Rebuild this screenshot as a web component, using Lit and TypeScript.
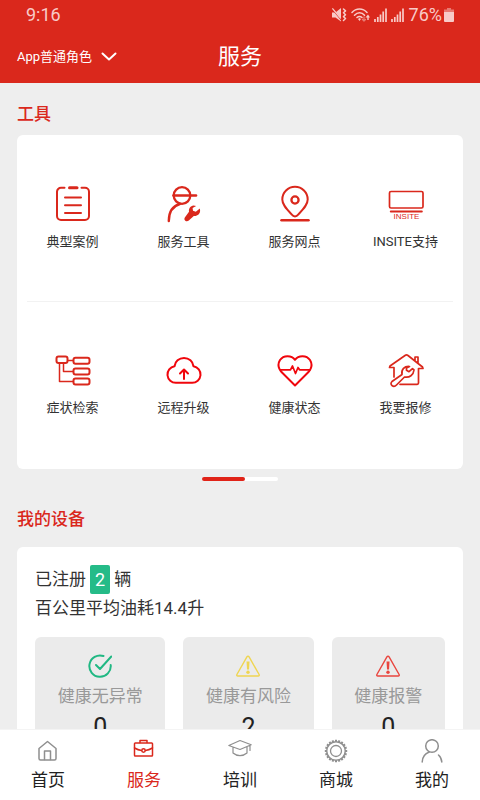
import { LitElement, html, css, svg, nothing } from "lit";
import { customElement, state } from "lit/decorators.js";

const icon = (w: number, h: number, body: unknown) => html`<svg
  width=${w} height=${h} viewBox="0 0 ${w} ${h}" fill="none" stroke="currentColor"
  stroke-width="2" stroke-linecap="round" stroke-linejoin="round" aria-hidden="true">${body}</svg>`;

const gearTeeth = Array.from({ length: 20 }, (_, i) => i * 18);

const icons = {
  chevron: icon(16, 10, svg`<path d="M1.5 1.5 8 7.5l6.500-6" />`),
  mute: icon(15, 14, svg`
    <path fill="currentColor" stroke="none" d="M0 4.500h3.500L9 0v13.500L3.500 9.500H0Z" />
    <path stroke="#da281c" stroke-width="1.400" d="M0 .5 9.500 12" />
    <path stroke-width="1.300" d="M.8.8 8.500 10" />
    <path stroke-width="1.500" d="M11.500 1l2 1.900-2 1.900 2 1.900-2 1.900 2 1.900-2 2" />`),
  wifi: icon(19, 14, svg`
    <g stroke-width="1.500"><path d="M1 4.500C5-.2 12-.2 16 4.500M3.500 7.200c3-3.200 7.200-3.200 10 0M6 9.500c1.500-1.500 3.500-1.500 5 0" /></g>
    <path fill="currentColor" stroke="none" d="m7 11 1.500-1 1.500 1-1.500 2ZM14.500 9.500 17 6.500l2 3h-1.300V12h-1.400V9.500Z" />
    <path opacity=".5" stroke-width="1.300" d="M13 9v4m-1.500-1.500L13 13l1.500-1.500" />`),
  signal: icon(13, 14, svg`<path stroke-width="1.700" stroke-linecap="butt"
    d="M1 14v-3M3.800 14V9M6.500 14V6.500M9.200 14V3.500M12 14V.5" />`),
  battery: icon(10, 14, svg`<g fill="currentColor" stroke="none">
    <path opacity=".5" d="M3 0h4v1.500h3V4H0V1.500h3Z" /><path d="M0 4h10v9a1 1 0 0 1-1 1H1a1 1 0 0 1-1-1Z" /></g>`),

  cases: icon(38, 38, svg`
    <path d="M10.500 2.800H7A4 4 0 0 0 3 6.800v24.200a4 4 0 0 0 4 4h24a4 4 0 0 0 4-4V6.800a4 4 0 0 0-4-4h-3.500" />
    <path stroke-width="3" d="M15.500 2.800h7.500" /><path d="M11 12.500h16M11 20.300h16M11 28h16" />`),
  worker: icon(38, 38, svg`
    <circle cx="17" cy="10.500" r="8.300" stroke-width="2.300" />
    <path stroke-width="2.600" d="M8.500 10.500h22.500" /><path stroke-width="2.400" d="M3.800 36c0-9 4-15 11-17" />
    <path fill="currentColor" stroke="none" d="M28.500 20.500c-3 .4-5 3-4.500 6.200L20 32.200c-2 2.800 1.500 5.500 3.800 3.300l5-4.500c3.500.4 6.500-2.200 6.300-5.500l-.3-2-4 3.200-2.800-1-.4-2.800 3.600-1.800Z" />`),
  pin: icon(38, 38, svg`
    <path d="M19 31.500c-2 0-2.500-1-4-2.800C10 23.500 6.300 19.500 6.300 14.500a12.700 12.700 0 0 1 25.400 0c0 5-3.700 9-8.700 14.200-1.500 1.800-2 2.800-4 2.800Z" />
    <circle cx="19" cy="15" r="3.600" stroke-width="2.300" /><path stroke-width="2.500" d="M5.500 35.300h27" />`),
  insite: icon(38, 38, svg`
    <rect x="2.500" y="6.500" width="33.500" height="16.500" rx="1.500" stroke-width="1.700" />
    <path stroke-width="2" d="M3.800 26.500h31" />
    <text class="glyph" x="19.500" y="33.500" text-anchor="middle">INSITE</text>`),
  tree: icon(38, 38, svg`
    <g stroke-width="2"><rect x="2.500" y="5.500" width="11" height="6.500" rx="2" /><rect x="19.500" y="6.800" width="16" height="6" rx="2" />
    <rect x="19.500" y="17.500" width="16" height="6" rx="2" /><rect x="19.500" y="27.500" width="16" height="6" rx="2" /></g>
    <path stroke-width="1.500" d="M14 9.500h5M9.500 12.500v8h9.500M5.500 12.500v18H19" />`),
  cloud: icon(38, 38, svg`
    <path stroke="#f0060c" d="M11 31.800a8.300 8.300 0 0 1-1.500-16.500C10 10.500 14 7 19 7s9 3.500 9.500 8.300a8.300 8.300 0 0 1-1.500 16.500Z" />
    <path stroke="#f0060c" d="M19 28v-8.500M15 22.500l4-4 4 4" />`),
  heart: icon(38, 38, svg`
    <path stroke="#f0060c" d="M19 34.500 6.500 22C2.500 18 1.500 13 4 9c3.500-5 11.500-5 15-.2C22.500 4 30.500 4 34 9c2.500 4 1.500 9-2.500 13Z" />
    <path stroke="#f0060c" stroke-width="1.700" d="M4.500 18.800h10l2-3.800 3 7.500 2.500-6 1.500 2.300h10.500" />`),
  repair: icon(38, 38, svg`<g stroke-width="1.700">
    <path d="M7 26v-9.500H2.500L3 15 18 4.500c1-.7 2-.7 3 0L35.500 16l.5 1.500h-4.500V32c0 .8-.5 1.300-1.300 1.300H13M28 9.500V6h3v6" />
    <path d="M22.500 15.500c-5-.5-8.500 3-7.500 8L5 30.500c-3 3 1.500 6.500 4.500 3.500l8-8c5 1 9-2 9.500-7l-1.500-1.300-3.500 3-2.500-1.500v-2.200Z" /></g>`),

  ok: icon(24, 24, svg`<path d="M15.500 2A10.700 10.700 0 1 0 22.700 11M8 11l4 4L23.300 2.500" />`),
  alert: icon(24, 24, svg`
    <path stroke-width="1.400" d="M12 2.200c.5 0 .8.200 1.100.7l10 17.600c.4.800 0 1.500-.9 1.500H1.800c-.9 0-1.300-.7-.9-1.500l10-17.600c.3-.5.600-.7 1.100-.7Z" />
    <path fill="currentColor" stroke="none" d="M10.500 7.500h3l-.5 8h-2Z" /><circle cx="12" cy="18.300" r="1.700" fill="currentColor" stroke="none" />`),

  home: icon(24, 24, svg`<g stroke-width="1.500"><path d="M3 9.500 11.500 2.500 20 9.500v10a1.500 1.500 0 0 1-1.500 1.500h-14A1.500 1.500 0 0 1 3 19.500Z" />
    <path d="M8.500 20.500V12h6v8.500" /></g>`),
  briefcase: icon(24, 24, svg`<g stroke-width="1.500"><rect x="2.500" y="4" width="18" height="13" rx=".8" />
    <path d="M8 3.500v-2h7v2M2.500 9c2.500 1.500 4.500 2.200 7 2.400M20.500 9c-2.500 1.500-4.500 2.200-7 2.400" /><circle cx="11.500" cy="11.500" r="1.700" /></g>`),
  cap: icon(24, 24, svg`<g stroke-width="1.200"><path d="M.8 6.500 12 1.500l11.200 4.200L12 10.500ZM5 8.500V14c4 3.500 10 3.500 14 0V8M22 6.500v5" /></g>`),
  gear: icon(24, 24, svg`<g stroke-width="1.500"><circle cx="12" cy="12" r="9.300" /><circle cx="12" cy="12" r="5.500" stroke-width="1.300" />
    ${gearTeeth.map((a) => svg`<path stroke-width="2" stroke-linecap="butt" d="M12 .8v2" transform="rotate(${a} 12 12)" />`)}</g>`),
  person: icon(24, 24, svg`<g stroke-width="1.500"><circle cx="12" cy="7" r="6.300" /><path d="M2.200 23c.2-5 3-8.500 7-10M18.500 16c2 1.800 3.200 4 3.300 7" /></g>`),
};

const tools = [
  { label: "典型案例", icon: icons.cases },
  { label: "服务工具", icon: icons.worker },
  { label: "服务网点", icon: icons.pin },
  { label: "INSITE支持", icon: icons.insite },
  { label: "症状检索", icon: icons.tree },
  { label: "远程升级", icon: icons.cloud },
  { label: "健康状态", icon: icons.heart },
  { label: "我要报修", icon: icons.repair },
];

const health = [
  { label: "健康无异常", count: 0, tone: "good", icon: icons.ok },
  { label: "健康有风险", count: 2, tone: "risk", icon: icons.alert },
  { label: "健康报警", count: 0, tone: "alarm", icon: icons.alert },
];

const tabs = [
  { label: "首页", icon: icons.home },
  { label: "服务", icon: icons.briefcase },
  { label: "培训", icon: icons.cap },
  { label: "商城", icon: icons.gear },
  { label: "我的", icon: icons.person },
];

@customElement("app-root")
export class AppRoot extends LitElement {
  @state() private activeTab = "服务";

  static styles = css`
    :host {
      display: flex;
      flex-direction: column;
      height: 100vh;
      overflow: hidden;
      background: #eeeeee;
      color: #333;
      font-family: Roboto, "Noto Sans CJK SC", sans-serif;
      font-size: 17px;
      line-height: 28px;
    }
    * { box-sizing: border-box; }
    svg { display: block; flex: none; }
    button {
      appearance: none;
      border: 0;
      padding: 0;
      background: none;
      color: inherit;
      font: inherit;
      cursor: pointer;
    }
    h1, h2, p { margin: 0; }

    .header { flex: none; background: #da281c; color: #fff; }
    .status {
      display: flex;
      align-items: center;
      height: 30px;
      padding: 0 26px;
      font-size: 18px;
      color: #f8cbc8;
    }
    .time { flex: 1; }
    .indicators { display: flex; align-items: center; gap: 4px; }
    .power { display: flex; align-items: center; gap: 2px; padding-left: 1px; }
    .titlebar {
      display: grid;
      grid-template-columns: 1fr auto 1fr;
      align-items: center;
      height: 53px;
      padding: 0 17px;
    }
    .role {
      justify-self: start;
      display: flex;
      align-items: center;
      gap: 9px;
      font-size: 13px;
      line-height: 20px;
    }
    .title { font-size: 22px; font-weight: 400; line-height: 32px; }

    .content { flex: 1; min-height: 0; overflow-y: auto; scrollbar-width: none; padding: 0 17px; }
    .heading { color: #da281c; font-size: 17px; font-weight: 500; line-height: 28px; }
    .tools-heading { padding: 17px 0 7px; }
    .devices-heading { padding: 24px 0 13px; }
    .card { background: #fff; border-radius: 6px; }

    .tools {
      position: relative;
      display: grid;
      grid-template-columns: repeat(4, 1fr);
      grid-auto-rows: 166px;
      padding: 0 2px 2px 0;
    }
    .tools::after {
      content: "";
      position: absolute;
      inset: 166px 10px auto;
      border-top: 1px solid #f2f2f2;
    }
    .tool {
      display: flex;
      flex-direction: column;
      align-items: center;
      justify-content: center;
      gap: 9px;
      font-size: 13px;
      line-height: 20px;
    }
    .tool svg { color: #da281c; }
    .glyph {
      fill: #da281c;
      stroke: none;
      font-family: "Liberation Sans", sans-serif;
      font-size: 8px;
    }
    .pager { display: flex; width: 76px; height: 4px; margin: 8px auto 0; border-radius: 2px; background: #fff; }
    .page-on { width: 43px; border-radius: 2px; background: #e02318; }

    .devices { margin-top: 1px; padding: 18px; }
    .registered { display: flex; align-items: center; gap: 4px; line-height: 29px; }
    .badge {
      padding: 0 5px;
      border-radius: 2px;
      background: #25bb88;
      color: #fff;
      font-size: 18px;
    }
    .panels { display: flex; gap: 18px; padding-top: 15px; }
    .panel {
      flex: 1 1 auto;
      display: flex;
      flex-direction: column;
      align-items: center;
      padding: 17px 0 12px;
      border-radius: 6px;
      background: #ebebeb;
      color: #999;
    }
    .panel svg { margin-bottom: 4px; }
    .good svg { color: #20b883; }
    .risk svg { color: #efd552; }
    .alarm svg { color: #e9463f; }
    .count { margin-top: 2px; color: #222; font-size: 25px; line-height: 32px; }

    .tabs {
      flex: none;
      display: grid;
      grid-template-columns: repeat(5, 1fr);
      height: 71px;
      border-top: 1px solid #f4f4f4;
      background: #fff;
    }
    .tab {
      display: flex;
      flex-direction: column;
      align-items: center;
      gap: 3px;
      padding-top: 9px;
      color: #222;
    }
    .tab svg { color: #8f8f8f; }
    .tab[aria-current], .tab[aria-current] svg { color: #da281c; }
  `;

  render() {
    return html`
      <header class="header">
        <div class="status">
          <span class="time">9:16</span>
          <div class="indicators">
            ${icons.mute}${icons.wifi}${icons.signal}${icons.signal}
            <span class="power">76%${icons.battery}</span>
          </div>
        </div>
        <div class="titlebar">
          <button class="role" type="button" aria-haspopup="listbox">App普通角色${icons.chevron}</button>
          <h1 class="title">服务</h1>
        </div>
      </header>

      <main class="content">
        <h2 class="heading tools-heading">工具</h2>
        <section class="card tools" aria-label="工具">
          ${tools.map((t) => html`<button class="tool" type="button">${t.icon}<span>${t.label}</span></button>`)}
        </section>
        <div class="pager"><span class="page-on"></span></div>

        <h2 class="heading devices-heading">我的设备</h2>
        <section class="card devices" aria-label="我的设备">
          <p class="registered">已注册<span class="badge">2</span>辆</p>
          <p>百公里平均油耗14.4升</p>
          <div class="panels">
            ${health.map((h) => html`<button class="panel ${h.tone}" type="button">
              ${h.icon}<span>${h.label}</span><span class="count">${h.count}</span>
            </button>`)}
          </div>
        </section>
      </main>

      <nav class="tabs">
        ${tabs.map((t) => html`<button class="tab" type="button"
          aria-current=${t.label === this.activeTab ? "page" : nothing}
          @click=${() => (this.activeTab = t.label)}>${t.icon}<span>${t.label}</span></button>`)}
      </nav>
    `;
  }
}
